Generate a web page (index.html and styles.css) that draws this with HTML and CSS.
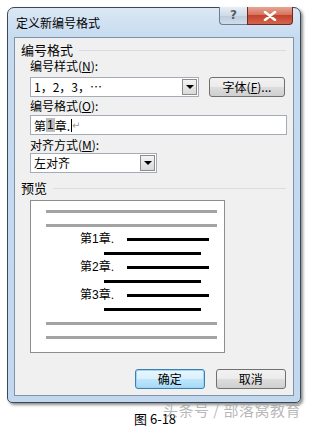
FILE: index.html
```html
<!DOCTYPE html>
<html lang="zh">
<head>
<meta charset="utf-8">
<link rel="stylesheet" href="styles.css">
</head>
<body>
<div class="page">
  <div class="window">
    <div class="titlebar">
      <span class="title">定义新编号格式</span>
      <div class="tb-buttons">
        <div class="tb-help">?</div>
        <div class="tb-close">
          <svg width="14" height="10" viewBox="0 0 14 10"><path d="M2 1 L12 9 M12 1 L2 9" stroke="#fff" stroke-width="2.6" stroke-linecap="round"/></svg>
        </div>
      </div>
    </div>
    <div class="client">
      <div class="group-label"><span>编号格式</span><i class="sep"></i></div>
      <div class="label l1">编号样式(<u>N</u>):</div>
      <div class="row r1">
        <div class="combo combo-style">
          <span class="combo-text">1，2，3，…</span>
          <span class="drop"><i class="tri"></i></span>
        </div>
        <div class="btn btn-font">字体(<u>F</u>)...</div>
      </div>
      <div class="label l2">编号格式(<u>O</u>):</div>
      <div class="input">第<span class="sel">1</span>章.<span class="caret"></span><span class="ret">↵</span></div>
      <div class="label l3">对齐方式(<u>M</u>):</div>
      <div class="combo combo-align">
        <span class="combo-text">左对齐</span>
        <span class="drop"><i class="tri"></i></span>
      </div>
      <div class="group-label g2"><span>预览</span><i class="sep"></i></div>
      <div class="preview">
        <div class="prow"><i class="gbar"></i></div>
        <div class="prow"><i class="gbar"></i></div>
        <div class="prow"><span class="ch">第1章.</span><i class="kbar k1"></i></div>
        <div class="prow"><i class="kbar k2"></i></div>
        <div class="prow"><span class="ch">第2章.</span><i class="kbar k1"></i></div>
        <div class="prow"><i class="kbar k2"></i></div>
        <div class="prow"><span class="ch">第3章.</span><i class="kbar k1"></i></div>
        <div class="prow"><i class="kbar k2"></i></div>
        <div class="prow"><i class="gbar"></i></div>
        <div class="prow"><i class="gbar"></i></div>
      </div>
      <div class="actions">
        <div class="btn btn-ok">确定</div>
        <div class="btn btn-cancel">取消</div>
      </div>
    </div>
  </div>
  <div class="caption">图 6-18</div>
  <div class="watermark">头条号 / 部落窝教育</div>
</div>
</body>
</html>
```

FILE: styles.css
```css
html, body {
  margin: 0;
  padding: 0;
  background: #fff;
}
body {
  font-family: "Noto Sans CJK SC", "Liberation Sans", sans-serif;
  font-size: 12px;
  color: #000;
}
.page {
  position: relative;
  width: 313px;
  height: 430px;
  padding: 7px 0 0 7px;
  box-sizing: border-box;
}
.window {
  width: 294px;
  box-sizing: border-box;
  border: 1px solid #3b4858;
  border-radius: 7px 7px 5px 5px;
  background: linear-gradient(to bottom, #dbe7f4 0px, #c6dbf0 30px, #c2d8ef 100%);
  box-shadow: 2px 2px 3px rgba(0,0,0,0.45);
}
.titlebar {
  height: 29px;
  display: flex;
  align-items: flex-start;
  position: relative;
}
.title {
  font-size: 12px;
  line-height: 14px;
  margin: 8px 0 0 8px;
  color: #000;
}
.tb-buttons {
  margin-left: auto;
  margin-right: 7px;
  display: flex;
  margin-top: -1px;
}
.tb-help {
  width: 28px;
  height: 18px;
  box-sizing: border-box;
  border: 1px solid #6c7f94;
  border-top: none;
  border-right: none;
  border-radius: 0 0 0 4px;
  background: linear-gradient(to bottom, #e8eef5 0%, #cfdbe8 50%, #bccbdc 51%, #d2dde9 100%);
  color: #555f6a;
  font-family: "DejaVu Sans", sans-serif;
  font-size: 12px;
  font-weight: bold;
  line-height: 17px;
  text-align: center;
}
.tb-close {
  width: 46px;
  height: 18px;
  box-sizing: border-box;
  border: 1px solid #6e2a22;
  border-top: none;
  border-radius: 0 0 4px 0;
  background: linear-gradient(to bottom, #e6a595 0%, #d8735f 45%, #c4432c 50%, #d2654c 100%);
  display: flex;
  align-items: center;
  justify-content: center;
}
.client {
  margin: 0 6px 6px 6px;
  height: 359px;
  box-sizing: border-box;
  border: 1px solid #7f92a8;
  background: #f0f0f0;
  padding: 5px 7px 0 6px;
  display: flex;
  flex-direction: column;
}
.group-label {
  display: flex;
  align-items: center;
  height: 14px;
  line-height: 14px;
  font-size: 13px;
}
.group-label .sep {
  flex: 1;
  height: 1px;
  background: #d7dde3;
  margin-left: 6px;
}
.g2 { margin-top: 8px; }
.label {
  height: 14px;
  line-height: 14px;
  margin-left: 9px;
  font-size: 12px;
}
.label u { text-decoration: underline; }
.l1 { margin-top: 2px; }
.l2 { margin-top: 2px; }
.l3 { margin-top: 3px; }
.row {
  display: flex;
  align-items: center;
  margin-left: 9px;
}
.r1 { margin-top: 4px; }
.combo {
  height: 20px;
  box-sizing: border-box;
  border: 1px solid #a5acb5;
  background: #fff;
  display: flex;
  align-items: center;
  padding: 1px;
}
.combo-style { width: 169px; }
.combo-align { width: 127px; margin: 1px 0 0 9px; }
.combo-text {
  flex: 1;
  padding-left: 2px;
  line-height: 16px;
  font-size: 12px;
}
.drop {
  width: 15px;
  height: 16px;
  box-sizing: border-box;
  border: 1px solid #8c8c8c;
  background: linear-gradient(to bottom, #f4f4f4, #d9d9d9);
  display: flex;
  align-items: center;
  justify-content: center;
}
.tri {
  width: 0;
  height: 0;
  border-left: 4px solid transparent;
  border-right: 4px solid transparent;
  border-top: 4px solid #000;
}
.btn {
  height: 20px;
  box-sizing: border-box;
  border: 1px solid #707070;
  border-radius: 3px;
  background: linear-gradient(to bottom, #f2f2f2 0%, #ebebeb 50%, #dddddd 51%, #cfcfcf 100%);
  display: flex;
  align-items: center;
  justify-content: center;
  font-size: 12px;
  line-height: 14px;
}
.btn-font {
  width: 76px;
  margin-left: 10px;
}
.input {
  margin: 2px 0 0 9px;
  height: 20px;
  width: 257px;
  box-sizing: border-box;
  border: 1px solid #a5acb5;
  background: #fff;
  display: flex;
  align-items: center;
  padding-left: 3px;
  font-size: 12px;
}
.sel {
  background: #bdbdbd;
  font-family: "Liberation Sans", sans-serif;
  padding: 0 1px;
}
.caret {
  width: 1px;
  height: 13px;
  background: #000;
  margin-left: 1px;
}
.ret {
  color: #9a9a9a;
  font-size: 10px;
  font-family: "DejaVu Sans", sans-serif;
}
.preview {
  margin: 5px 0 0 9px;
  width: 195px;
  height: 153px;
  box-sizing: border-box;
  border: 1px solid #8e8e8e;
  background: #fff;
  padding-top: 3px;
  display: flex;
  flex-direction: column;
}
.prow {
  height: 14px;
  display: flex;
  align-items: center;
}
.gbar {
  width: 171px;
  height: 3px;
  background: #a3a3a3;
  margin-left: 15px;
}
.ch {
  width: 47px;
  margin-left: 49px;
  font-family: "Liberation Sans", "Noto Sans CJK SC", sans-serif;
  font-size: 12px;
  line-height: 14px;
}
.kbar {
  height: 3px;
  background: #000;
}
.k1 { width: 82px; }
.k2 { width: 97px; margin-left: 73px; }
.actions {
  display: flex;
  margin: 16px 0 0 114px;
}
.btn-ok {
  width: 72px;
  border-color: #3c7fb1;
  box-shadow: inset 0 0 0 1px #9ed4f5;
  background: linear-gradient(to bottom, #eaf6fd 0%, #d9f0fc 50%, #bee6fd 51%, #a7d9f5 100%);
}
.btn-cancel {
  width: 73px;
  margin-left: 11px;
}
.caption {
  margin: 8px 0 0 127px;
  font-size: 13px;
  line-height: 16px;
  font-family: "Noto Sans CJK SC", "Liberation Sans", sans-serif;
}
.watermark {
  position: absolute;
  left: 163px;
  top: 401px;
  font-size: 15px;
  line-height: 18px;
  color: rgba(160,160,160,0.75);
  white-space: nowrap;
  letter-spacing: 0.5px;
}
```
